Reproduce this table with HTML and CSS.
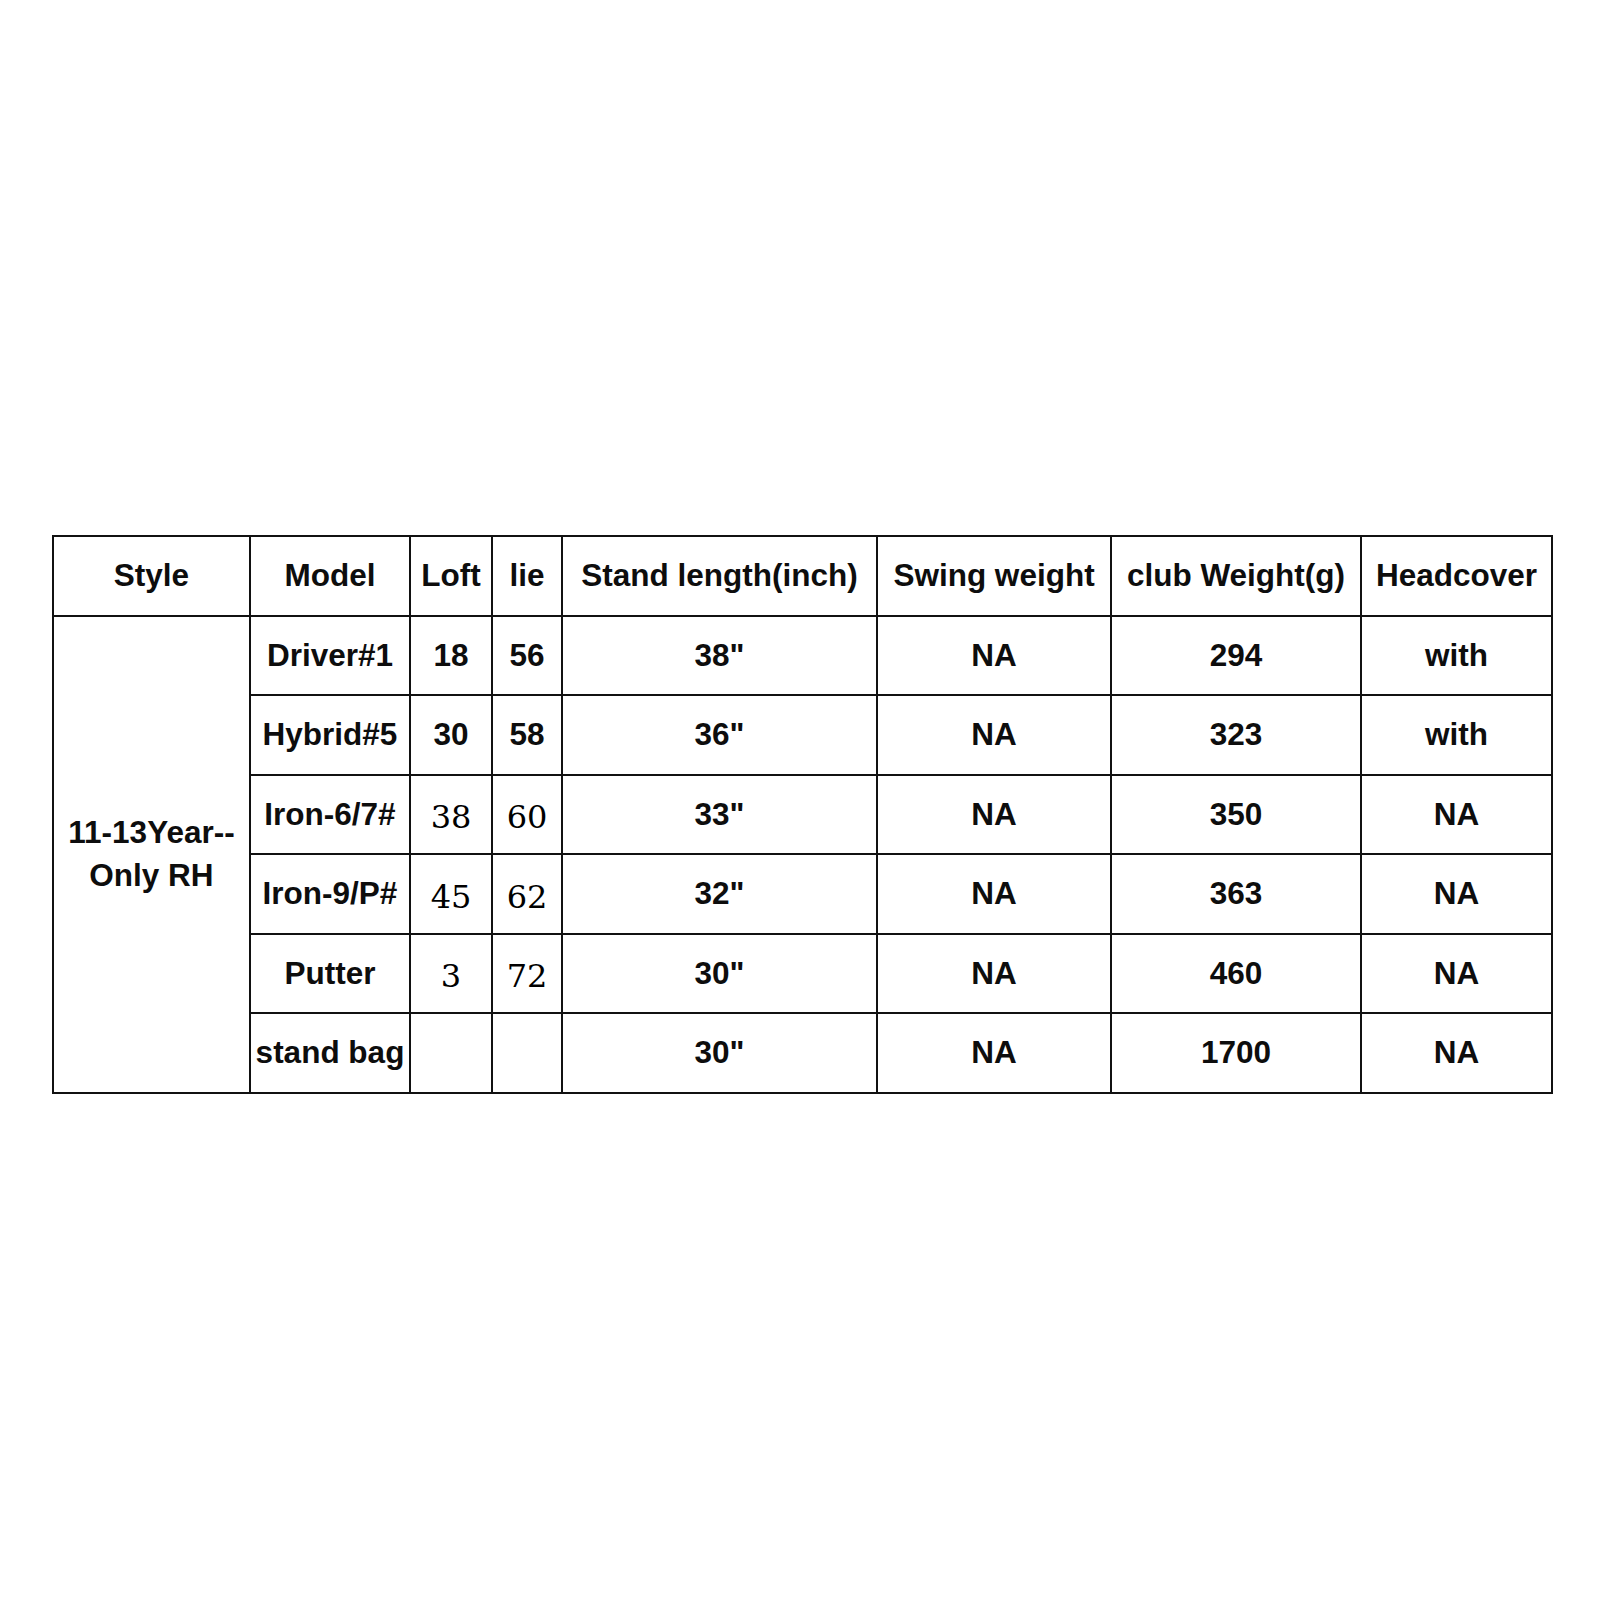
FILE: index.html
```html
<!DOCTYPE html>
<html>
<head>
<meta charset="utf-8">
<link rel="stylesheet" href="styles.css">
</head>
<body>
<div class="page">
<table class="spec">
<colgroup>
<col class="c-style"><col class="c-model"><col class="c-loft"><col class="c-lie"><col class="c-len"><col class="c-swing"><col class="c-weight"><col class="c-head">
</colgroup>
<tr><th>Style</th><th>Model</th><th>Loft</th><th>lie</th><th>Stand length(inch)</th><th>Swing weight</th><th>club Weight(g)</th><th>Headcover</th></tr>
<tr><td rowspan="6" class="style-cell">11-13Year--<br>Only RH</td><td>Driver#1</td><td>18</td><td>56</td><td>38"</td><td>NA</td><td>294</td><td>with</td></tr>
<tr><td>Hybrid#5</td><td>30</td><td>58</td><td>36"</td><td>NA</td><td>323</td><td>with</td></tr>
<tr><td>Iron-6/7#</td><td class="serif">38</td><td class="serif">60</td><td>33"</td><td>NA</td><td>350</td><td>NA</td></tr>
<tr><td>Iron-9/P#</td><td class="serif">45</td><td class="serif">62</td><td>32"</td><td>NA</td><td>363</td><td>NA</td></tr>
<tr><td>Putter</td><td class="serif">3</td><td class="serif">72</td><td>30"</td><td>NA</td><td>460</td><td>NA</td></tr>
<tr><td>stand bag</td><td></td><td></td><td>30"</td><td>NA</td><td>1700</td><td>NA</td></tr>
</table>
</div>
</body>
</html>
```
FILE: styles.css
```css
html, body {
  margin: 0;
  padding: 0;
  background: #fff;
}
.page {
  padding: 535px 0 0 52px;
}
.spec {
  border-collapse: collapse;
  table-layout: fixed;
  width: 1499px;
  font-family: "Liberation Sans", Arial, sans-serif;
  font-weight: bold;
  font-size: 31.5px;
  color: #0d0d0d;
}
.c-style { width: 197px; }
.c-model { width: 160px; }
.c-loft { width: 82px; }
.c-lie { width: 70px; }
.c-len { width: 315px; }
.c-swing { width: 234px; }
.c-weight { width: 250px; }
.c-head { width: 191px; }
.spec th, .spec td {
  border: 2px solid #111;
  height: 77.5px;
  padding: 0;
  text-align: center;
  vertical-align: middle;
  white-space: nowrap;
  font-weight: bold;
}
.spec .style-cell {
  line-height: 43px;
}
.spec .serif {
  font-family: "DejaVu Serif", "Liberation Serif", serif;
  font-weight: normal;
  font-size: 32px;
  color: #000;
  height: 71.5px;
  padding-top: 6px;
}
```
